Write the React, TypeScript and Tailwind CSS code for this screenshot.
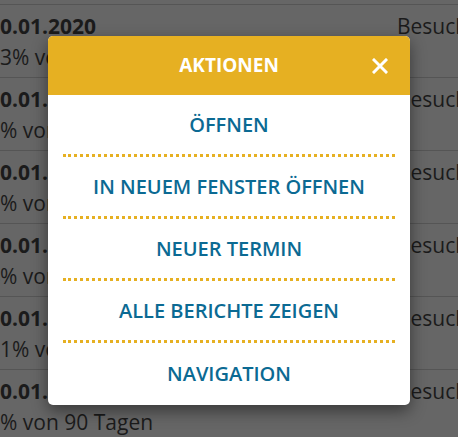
import React from 'react';

const rows: [string, string, string][] = [
  ['20.01.2020', '33% von 90 Tagen', 'Besuche'],
  ['20.01.2020', '5% von 90 Tagen', 'Besuche'],
  ['20.01.2020', '7% von 90 Tagen', 'Besuche'],
  ['20.01.2020', '4% von 90 Tagen', 'Besuche'],
  ['20.01.2020', '21% von 90 Tagen', 'Besuche'],
  ['20.01.2020', '9% von 90 Tagen', 'Besuche'],
];

const actions = ['Öffnen', 'In neuem Fenster öffnen', 'Neuer Termin', 'Alle Berichte zeigen', 'Navigation'];

function CloseIcon() {
  return (
    <svg width="16" height="16" viewBox="0 0 16 16" className="block">
      <path d="M2 2L14 14M14 2L2 14" stroke="#ffffff" strokeWidth="3" strokeLinecap="square" />
    </svg>
  );
}

export default function App() {
  return (
    <div
      className="relative h-[437px] w-[458px] overflow-hidden bg-[#666666] text-[#1b1b1b]"
      style={{ fontFamily: '"Open Sans", "Noto Sans", sans-serif' }}
    >
      <div className="h-[5px] border-b border-[#555555]" />
      {rows.map(([date, share, label], i) => (
        <div key={i} className="flex h-[73px] border-b border-[#555555] pt-[6px] text-[21px] leading-[31px]">
          <div className="-ml-[12px] w-[409px] shrink-0 whitespace-nowrap">
            <div className="font-bold">{date}</div>
            <div>{share}</div>
          </div>
          <div className="whitespace-nowrap">{label}</div>
        </div>
      ))}

      <div className="absolute left-[48px] top-[36px] w-[362px] overflow-hidden rounded-[5px] bg-white shadow-[0_6px_16px_rgba(0,0,0,0.45)]">
        <div className="relative flex h-[59px] items-center justify-center bg-[#e6b022]">
          <span className="text-[19px] font-bold uppercase text-white">Aktionen</span>
          <button className="absolute right-[22px] top-[22px]">
            <CloseIcon />
          </button>
        </div>
        <div className="px-[15px]">
          {actions.map((a, i) => (
            <div
              key={a}
              className={`flex h-[62px] items-center justify-center text-[20px] font-semibold uppercase text-[#0b6a93] ${
                i < actions.length - 1 ? 'border-b-[3px] border-dotted border-[#e6b022]' : ''
              }`}
            >
              {a}
            </div>
          ))}
        </div>
      </div>
    </div>
  );
}
